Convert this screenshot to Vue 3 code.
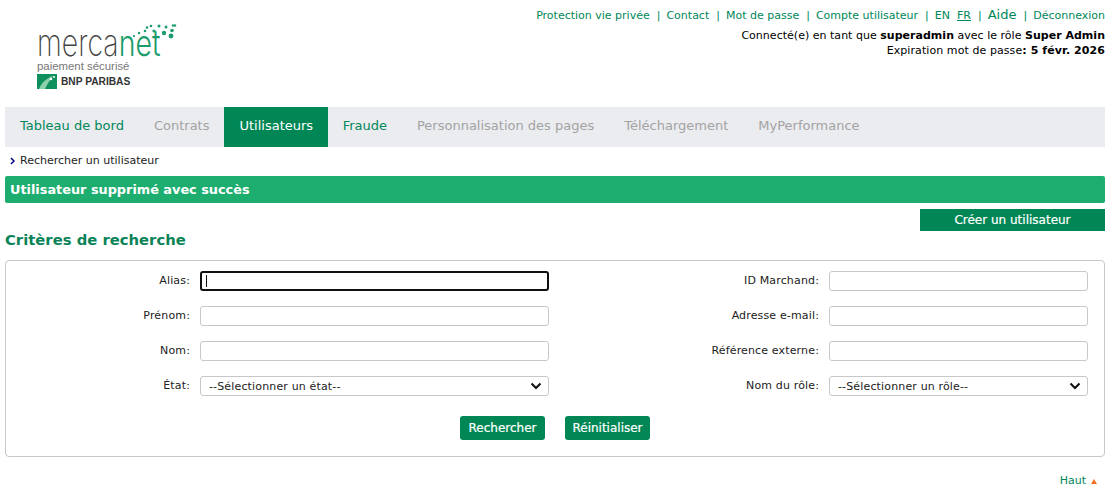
<template>
  <div class="page">
    <header class="top">
      <div class="logo">
        <svg class="dots" width="46" height="16" viewBox="0 0 46 16">
          <circle v-for="(d, i) in dots" :key="i" :cx="d[0]" :cy="d[1]" :r="d[2]" fill="#1a9c6c" />
        </svg>
        <div class="wordmark"><span>merca</span><span class="net">net</span></div>
        <div class="tagline">paiement sécurisé</div>
        <div class="bank">
          <svg width="20" height="15" viewBox="0 0 20 15">
            <rect width="20" height="15" fill="#0f8f5c" />
            <path d="M2 15 C5 8 10 4 16 2 C13 6 10 10 8 15 Z" fill="#8fd0ac" />
            <circle cx="14" cy="5" r="1.3" fill="#fff" />
            <circle cx="17" cy="3" r="1" fill="#fff" />
          </svg>
          <span>BNP PARIBAS</span>
        </div>
      </div>
      <div class="account">
        <div class="links">
          <a>Protection vie privée</a><i>|</i>
          <a>Contact</a><i>|</i>
          <a>Mot de passe</a><i>|</i>
          <a>Compte utilisateur</a><i>|</i>
          <a>EN</a><a class="lang">FR</a><i>|</i>
          <a class="help">Aide</a><i>|</i>
          <a>Déconnexion</a>
        </div>
        <div class="who">Connecté(e) en tant que <b>superadmin</b> avec le rôle <b>Super Admin</b></div>
        <div class="who">Expiration mot de passe<b>: 5 févr. 2026</b></div>
      </div>
    </header>

    <nav class="menu">
      <a v-for="item in menu" :key="item.label" :class="item.state">{{ item.label }}</a>
    </nav>

    <div class="crumb">
      <svg width="5" height="8" viewBox="0 0 5 8"><path d="M1 1l3 3-3 3" fill="none" stroke="#000080" stroke-width="1.5" /></svg>
      <span>Rechercher un utilisateur</span>
    </div>

    <div class="notice">Utilisateur supprimé avec succès</div>

    <div class="actions"><button class="create">Créer un utilisateur</button></div>

    <h2>Critères de recherche</h2>

    <section class="panel">
      <div class="fields">
        <template v-for="f in fields" :key="f.label">
          <label>{{ f.label }}:</label>
          <select v-if="f.options">
            <option>{{ f.options }}</option>
          </select>
          <input v-else :class="{ active: f.label === 'Alias' }" type="text" />
        </template>
      </div>
      <div class="buttons">
        <button>Rechercher</button>
        <button>Réinitialiser</button>
      </div>
    </section>

    <div class="back"><a>Haut</a><span class="arrow"></span></div>
  </div>
</template>

<script setup>
const menu = [
  { label: 'Tableau de bord', state: 'on' },
  { label: 'Contrats', state: 'off' },
  { label: 'Utilisateurs', state: 'current' },
  { label: 'Fraude', state: 'on' },
  { label: 'Personnalisation des pages', state: 'off' },
  { label: 'Téléchargement', state: 'off' },
  { label: 'MyPerformance', state: 'off' }
]

// ordre de lecture : gauche puis droite, ligne par ligne
const fields = [
  { label: 'Alias' },
  { label: 'ID Marchand' },
  { label: 'Prénom' },
  { label: 'Adresse e-mail' },
  { label: 'Nom' },
  { label: 'Référence externe' },
  { label: 'État', options: '--Sélectionner un état--' },
  { label: 'Nom du rôle', options: '--Sélectionner un rôle--' }
]

const dots = [
  [1, 12, 1.1], [6, 9, 1.2], [12, 7, 1.3], [14, 3.5, 1.3], [18, 2, 1.3],
  [21, 7, 1.6], [26, 2, 1.5], [31, 9, 2.2], [33, 3, 1.5], [39, 6.5, 1.8],
  [40, 1.5, 1.2], [38, 12, 2.4], [42, 1.5, 1.2]
]
</script>

<style>
html, body {
  margin: 0;
  background: #fff;
  overflow: hidden;
}
</style>

<style scoped>
.page {
  width: 1100px;
  margin-left: 5px;
  font-family: "DejaVu Sans", Verdana, sans-serif;
  font-size: 11px;
  color: #000;
}

.top {
  height: 107px;
  display: flex;
  justify-content: space-between;
}

.logo {
  position: relative;
  width: 150px;
  padding: 29px 0 0 32px;
  color: #444;
}

.dots {
  position: absolute;
  left: 128px;
  top: 24px;
}

.wordmark {
  font-family: Inter, Lato, sans-serif;
  font-weight: 200;
  font-size: 37px;
  line-height: 28px;
  height: 30px;
  white-space: nowrap;
  transform: scaleX(0.77);
  transform-origin: left;
}

.net {
  color: #1a9c6c;
  font-weight: 300;
}

.tagline {
  font-family: "Liberation Sans", Arial, sans-serif;
  font-size: 11.4px;
  line-height: 12px;
  color: #777;
  margin-top: 1px;
}

.bank {
  display: flex;
  align-items: center;
  gap: 4px;
  margin-top: 2px;
  font-family: "Liberation Sans", Arial, sans-serif;
  font-weight: 700;
  font-size: 10.2px;
  color: #333;
}

.account {
  text-align: right;
  padding-top: 7px;
}

.links {
  display: flex;
  justify-content: flex-end;
  align-items: baseline;
  height: 14px;
  margin-bottom: 7px;
  color: #00875a;
}

.links i {
  font-style: normal;
  margin: 0 6px 0 7px;
}

.lang {
  margin-left: 7px;
  text-decoration: underline;
}

.help {
  font-size: 13px;
}

.who {
  line-height: 15px;
  letter-spacing: 0.02px;
}

.who + .who {
  letter-spacing: 0.08px;
}

.menu {
  display: flex;
  height: 40px;
  background: #ebecf0;
  font-size: 13px;
}

.menu a {
  padding: 0 15px;
  line-height: 37px;
}

.menu .on {
  color: #00875a;
}

.menu .off {
  color: #a3a3a3;
}

.menu .current {
  background: #008755;
  color: #fff;
  margin-right: -0.5px;
}

.crumb {
  display: flex;
  align-items: center;
  gap: 5px;
  height: 29px;
  box-sizing: border-box;
  padding: 1px 0 3px 5px;
  color: #222;
}

.notice {
  height: 27px;
  line-height: 27px;
  padding-left: 5px;
  background: #1dae6f;
  border-radius: 2px;
  color: #fff;
  font-size: 12.85px;
  font-weight: 700;
}

.actions {
  display: flex;
  justify-content: flex-end;
  margin-top: 6px;
}

.create {
  width: 185px;
  height: 22px;
  border: 0;
  padding: 0;
  background: #008755;
  color: #fff;
  font: 12px "DejaVu Sans", Verdana, sans-serif;
  -webkit-text-stroke: 0.2px #fff;
}

h2 {
  margin: 0;
  height: 29px;
  box-sizing: border-box;
  line-height: 18px;
  font-size: 14.8px;
  font-weight: 700;
  color: #0a8357;
}

.panel {
  height: 197px;
  box-sizing: border-box;
  border: 1px solid #c8c8c8;
  border-radius: 4px;
  padding-top: 10px;
}

.fields {
  display: grid;
  grid-template-columns: 184px 349px 260px 259px;
  column-gap: 10px;
  row-gap: 15px;
}

.fields label {
  text-align: right;
  line-height: 20px;
  letter-spacing: 0.15px;
  color: #222;
}

.fields input,
.fields select {
  box-sizing: border-box;
  width: 100%;
  height: 20px;
  border: 1px solid #c8c8c8;
  border-radius: 3px;
  background: #fff;
  font: 11px "DejaVu Sans", Verdana, sans-serif;
  letter-spacing: 0.15px;
  color: #222;
  padding: 0 4px;
}

.fields select {
  appearance: none;
  padding-left: 8px;
  background: #fff url("data:image/svg+xml,%3Csvg xmlns='http://www.w3.org/2000/svg' width='12' height='8' viewBox='0 0 12 8'%3E%3Cpath d='M1.5 1.5L6 6l4.5-4.5' fill='none' stroke='%23111' stroke-width='2'/%3E%3C/svg%3E") no-repeat right 6px center;
}

.fields input.active {
  border: 2px solid #101010;
  background: #fff linear-gradient(#111, #111) 4px center / 1px 12px no-repeat;
}

.buttons {
  display: flex;
  justify-content: center;
  gap: 20px;
  margin-top: 20px;
}

.buttons button {
  width: 85px;
  height: 24px;
  border: 0;
  border-radius: 3px;
  padding: 0;
  background: #008755;
  color: #fff;
  font: 12px "DejaVu Sans", Verdana, sans-serif;
  -webkit-text-stroke: 0.2px #fff;
}

.back {
  display: flex;
  justify-content: flex-end;
  align-items: center;
  gap: 5px;
  margin-top: 17px;
  color: #00875a;
  line-height: 14px;
}

.arrow {
  width: 0;
  height: 0;
  border-left: 3.5px solid transparent;
  border-right: 3.5px solid transparent;
  border-bottom: 5px solid #f07020;
  margin-right: 8px;
}
</style>
